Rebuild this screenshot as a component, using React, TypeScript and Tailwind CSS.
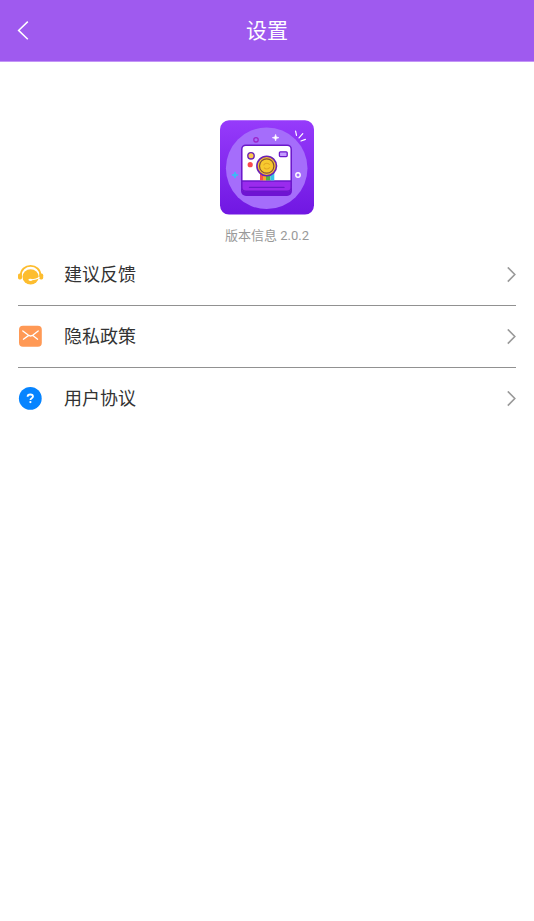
import type { ReactNode } from "react";

interface MenuItem {
  label: string;
  href: string;
  icon: ReactNode;
}

const menuItems: MenuItem[] = [
  { label: "建议反馈", href: "#feedback", icon: <SupportIcon /> },
  { label: "隐私政策", href: "#privacy", icon: <MailIcon /> },
  { label: "用户协议", href: "#agreement", icon: <QuestionIcon /> },
];

export default function App() {
  return (
    <div className="min-h-screen bg-white font-[Roboto,'Noto_Sans_CJK_SC',sans-serif]">
      <header className="grid h-[62px] grid-cols-[1fr_auto_1fr] items-center border-b border-[#c495f7] bg-[#9f5aef] px-4 text-white">
        <button type="button" aria-label="返回" className="justify-self-start">
          <svg className="h-5 w-4" viewBox="0 0 16 20" fill="none" stroke="currentColor" strokeWidth={1.5}>
            <path d="M11.8 0.6L2.6 9.4l9.2 8.8" />
          </svg>
        </button>
        <h1 className="text-[21px] leading-8">设置</h1>
      </header>

      <main>
        <section className="flex flex-col items-center pt-[58px]">
          <AppLogo />
          <p className="mt-[13px] text-[13px] leading-4 text-[#999999]">版本信息 2.0.2</p>
        </section>

        <nav className="px-[18px]">
          <ul className="divide-y divide-[#919191]">
            {menuItems.map((item) => (
              <li key={item.label}>
                <a href={item.href} className="flex h-[61px] items-center text-lg text-[#333333]">
                  {item.icon}
                  <span className="ml-5 flex-1">{item.label}</span>
                  <ChevronIcon />
                </a>
              </li>
            ))}
          </ul>
        </nav>
      </main>
    </div>
  );
}

function ChevronIcon() {
  return (
    <svg className="h-4 w-2.5" viewBox="0 0 10 16" fill="none" stroke="#999999" strokeWidth={1.6}>
      <path d="M1.8 0.4l7 7.1-7 7.1" />
    </svg>
  );
}

function SupportIcon() {
  return (
    <svg className="h-[26px] w-[26px]" viewBox="0 0 26 26" fill="none">
      <path d="M2.8 13a9.8 9.2 0 0 1 19.6 0" stroke="#fdbd2f" strokeWidth={1.8} />
      <rect x="0" y="11.6" width="4" height="5.8" rx="1.6" fill="#fdbd2f" />
      <rect x="21.2" y="11.6" width="4" height="5.8" rx="1.6" fill="#fdbd2f" />
      <ellipse cx="12.6" cy="14.8" rx="8.1" ry="7.6" fill="#fdbd2f" />
      <path d="M21.4 15.2c-1.8 1.8-4.5 2.5-8.6 2.6" stroke="#ffffff" strokeWidth={1.2} />
      <ellipse cx="12.4" cy="17.8" rx="2" ry="1.1" fill="#ffffff" />
    </svg>
  );
}

function MailIcon() {
  return (
    <svg className="h-[26px] w-[26px]" viewBox="0 0 26 26" fill="none">
      <rect x="1" y="1.8" width="22.8" height="21" rx="4" fill="#ff9955" />
      <path
        d="M4.8 6.9l5.4 4.2c1.5 1.1 3.3 1.1 4.8 0l5.2-4.2M5.4 15.2l5-3.6M19.6 15.2l-4.8-3.6"
        stroke="#ffffff"
        strokeWidth={1.3}
        strokeLinecap="round"
      />
    </svg>
  );
}

function QuestionIcon() {
  return (
    <svg className="h-[26px] w-[26px]" viewBox="0 0 26 26" fill="none">
      <circle cx="12.3" cy="12.4" r="11.4" fill="#0684ff" />
      <path
        d="M9.6 10.8c0-1.5 1.2-2.3 2.7-2.3s2.7.8 2.7 2.1c0 1.7-2.6 1.5-2.6 3.4"
        stroke="#ffffff"
        strokeWidth={1.8}
      />
      <circle cx="12.4" cy="16.1" r="1.1" fill="#ffffff" />
    </svg>
  );
}

function AppLogo() {
  return (
    <svg className="h-[95px] w-[94px]" viewBox="0 0 94 95" fill="none">
      <defs>
        <linearGradient id="logo-bg" x1="0" y1="0" x2="0" y2="1">
          <stop offset="0" stopColor="#963bfb" />
          <stop offset="1" stopColor="#7017e2" />
        </linearGradient>
      </defs>
      <rect y="0.3" width="94" height="94.3" rx="9" fill="url(#logo-bg)" />
      <circle cx="46.7" cy="48.3" r="40.8" fill="#a56dfb" />

      {/* Camera body */}
      <rect x="21" y="27" width="51" height="49" rx="5" fill="#6e14d2" />
      <rect x="21.8" y="25.2" width="49.4" height="46" rx="4" fill="#ffffff" />
      <path d="M21.8 61h49.4v6.5a4 4 0 0 1-4 4H25.8a4 4 0 0 1-4-4z" fill="#9a2bed" />
      <path d="M21.8 61h49.4" stroke="#6b18cb" strokeWidth={1.4} />
      <rect x="21.8" y="25.2" width="49.4" height="46" rx="4" stroke="#6b18cb" strokeWidth={1.5} />
      <path d="M29.5 67.4h34.5" stroke="#6b18cb" strokeWidth={1.3} strokeLinecap="round" />

      {/* Rainbow strip */}
      <rect x="40" y="51" width="3" height="9.4" fill="#f4514f" />
      <rect x="43" y="51" width="3" height="9.4" fill="#f6a62a" />
      <rect x="46" y="51" width="4.5" height="9.4" fill="#4fb04a" />
      <rect x="50.5" y="51" width="3.8" height="9.4" fill="#35c3e8" />

      {/* Lens */}
      <circle cx="46.7" cy="46" r="9.8" fill="#f7c331" stroke="#6b23b5" strokeWidth={1.6} />
      <circle cx="46.7" cy="46" r="7.2" fill="#f7c92f" stroke="#845038" strokeWidth={1.2} />
      <path d="M43.6 45.4c.8-2.6 4.8-3 6-.6M44 47.6c1.4 2 4.6 1.8 5.8-.4" stroke="#e3a824" strokeWidth={1.1} />

      <circle cx="31" cy="35.8" r="3.2" fill="#fcc94d" stroke="#6b23b5" strokeWidth={1.4} />
      <circle cx="30.2" cy="44.7" r="2.6" fill="#f94a4e" />
      <rect x="59.4" y="31.8" width="7.8" height="4.8" rx="1" fill="#c49aff" stroke="#6b18cb" strokeWidth={1.3} />

      {/* Sparkles */}
      <circle cx="36" cy="19.8" r="2.2" stroke="#9b25c9" strokeWidth={1.3} />
      <circle cx="78" cy="55" r="2.2" stroke="#ffffff" strokeWidth={1.4} />
      <path
        d="M55.6 14.4l.8 2.5 2.5.8-2.5.8-.8 2.5-.8-2.5-2.5-.8 2.5-.8z"
        fill="#ffffff"
        stroke="#ffffff"
        strokeWidth={0.6}
      />
      <path
        d="M15 51.9l.8 2.3 2.3.8-2.3.8-.8 2.3-.8-2.3-2.3-.8 2.3-.8z"
        fill="#39bdf5"
        stroke="#39bdf5"
        strokeWidth={0.9}
      />
      <path d="M75.6 11.2l.9 4.2M82.8 13.6l-3.8 4.2M85.4 19.4l-4.4 1.6" stroke="#ffffff" strokeWidth={1.2} strokeLinecap="round" />
    </svg>
  );
}
